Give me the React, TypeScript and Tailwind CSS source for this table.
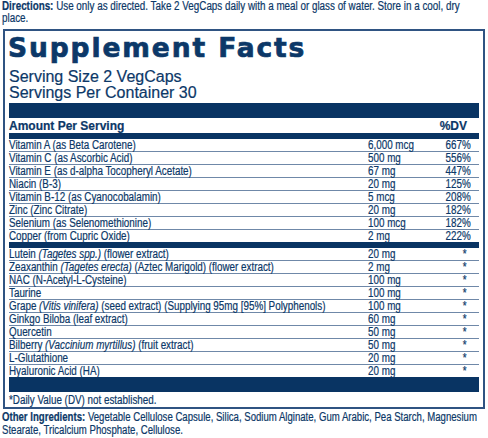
import React from "react";

const NAVY = "text-[#0c3868]";

type Row = { name: React.ReactNode; amt: string; dv: string };

const vitamins: Row[] = [
  { name: "Vitamin A (as Beta Carotene)", amt: "6,000 mcg", dv: "667%" },
  { name: "Vitamin C (as Ascorbic Acid)", amt: "500 mg", dv: "556%" },
  { name: "Vitamin E (as d-alpha Tocopheryl Acetate)", amt: "67 mg", dv: "447%" },
  { name: "Niacin (B-3)", amt: "20 mg", dv: "125%" },
  { name: "Vitamin B-12 (as Cyanocobalamin)", amt: "5 mcg", dv: "208%" },
  { name: "Zinc (Zinc Citrate)", amt: "20 mg", dv: "182%" },
  { name: "Selenium (as Selenomethionine)", amt: "100 mcg", dv: "182%" },
  { name: "Copper (from Cupric Oxide)", amt: "2 mg", dv: "222%" },
];

const others: Row[] = [
  { name: (<>Lutein <i>(Tagetes spp.)</i> (flower extract)</>), amt: "20 mg", dv: "*" },
  { name: (<>Zeaxanthin <i>(Tagetes erecta)</i> (Aztec Marigold) (flower extract)</>), amt: "2 mg", dv: "*" },
  { name: "NAC (N-Acetyl-L-Cysteine)", amt: "100 mg", dv: "*" },
  { name: "Taurine", amt: "100 mg", dv: "*" },
  { name: (<>Grape <i>(Vitis vinifera)</i> (seed extract) (Supplying 95mg [95%] Polyphenols)</>), amt: "100 mg", dv: "*" },
  { name: "Ginkgo Biloba (leaf extract)", amt: "60 mg", dv: "*" },
  { name: "Quercetin", amt: "50 mg", dv: "*" },
  { name: (<>Bilberry <i>(Vaccinium myrtillus)</i> (fruit extract)</>), amt: "50 mg", dv: "*" },
  { name: "L-Glutathione", amt: "20 mg", dv: "*" },
  { name: "Hyaluronic Acid (HA)", amt: "20 mg", dv: "*" },
];

const sans = "font-['Liberation_Sans',Arial,sans-serif]";

function N({ children, right }: { children: React.ReactNode; right?: boolean }) {
  return (
    <span
      className={`inline-block whitespace-nowrap scale-x-[0.82] ${right ? "origin-right" : "origin-left"}`}
    >
      {children}
    </span>
  );
}

function Rows({ rows }: { rows: Row[] }) {
  return (
    <div>
      {rows.map((r, i) => (
        <div
          key={i}
          className={`grid grid-cols-[359px_72px_27px] h-[13px] border-b border-[#6f88a8] text-[12px] leading-[12px] ${sans}`}
        >
          <div className="whitespace-nowrap overflow-visible">
            <N>{r.name}</N>
          </div>
          <div className="whitespace-nowrap">
            <N>{r.amt}</N>
          </div>
          <div className="text-right">
            <N right>{r.dv}</N>
          </div>
        </div>
      ))}
    </div>
  );
}

export default function App() {
  return (
    <div className={`w-[488px] h-[438px] bg-white overflow-hidden ${NAVY} [-webkit-text-stroke:0.2px_#0c3868]`}>
      <div className="h-[24px]">
        <div className={`w-[572px] ml-[2px] origin-top-left scale-x-[0.82] text-[12px] leading-[12px] ${sans}`}>
          <b>Directions:</b> Use only as directed. Take 2 VegCaps daily with a meal or glass of water. Store in a cool, dry place.
        </div>
      </div>
      <div className="ml-[3px] mt-[5px] w-[482px] h-[380px] border-2 border-[#2f5382] px-[4px]">
        <div className="h-[38px] -ml-[1px] font-['DejaVu_Sans',sans-serif] font-bold text-[26.5px] leading-[34px] tracking-[1.9px] [-webkit-text-stroke:0.7px_#0c3868]">
          Supplement Facts
        </div>
        <div className={`${sans} text-[16px] leading-[16px]`}>
          <div>Serving Size 2 VegCaps</div>
          <div>Servings Per Container 30</div>
        </div>
        <div className="mt-[2px] h-[15px] bg-[#093463]" />
        <div className={`h-[15px] pr-[12px] flex justify-between items-end ${sans} font-bold text-[12px] leading-[14px]`}>
          <span>Amount Per Serving</span>
          <span>%DV</span>
        </div>
        <div className="h-[6px] bg-[#093463]" />
        <Rows rows={vitamins} />
        <div className="h-[6px] bg-[#093463] -mt-[1px]" />
        <Rows rows={others} />
        <div className="h-[15px] bg-[#093463] -mt-[1px]" />
        <div className={`pt-[2px] ${sans} text-[12px] leading-[13px]`}>
          <N>*Daily Value (DV) not established.</N>
        </div>
      </div>
      <div className="mt-[2px] h-[26px]">
        <div className={`w-[610px] ml-[2px] origin-top-left scale-x-[0.8] text-[12px] leading-[13px] ${sans}`}>
          <b>Other Ingredients:</b> Vegetable Cellulose Capsule, Silica, Sodium Alginate, Gum Arabic, Pea Starch, Magnesium Stearate, Tricalcium Phosphate, Cellulose.
        </div>
      </div>
    </div>
  );
}
